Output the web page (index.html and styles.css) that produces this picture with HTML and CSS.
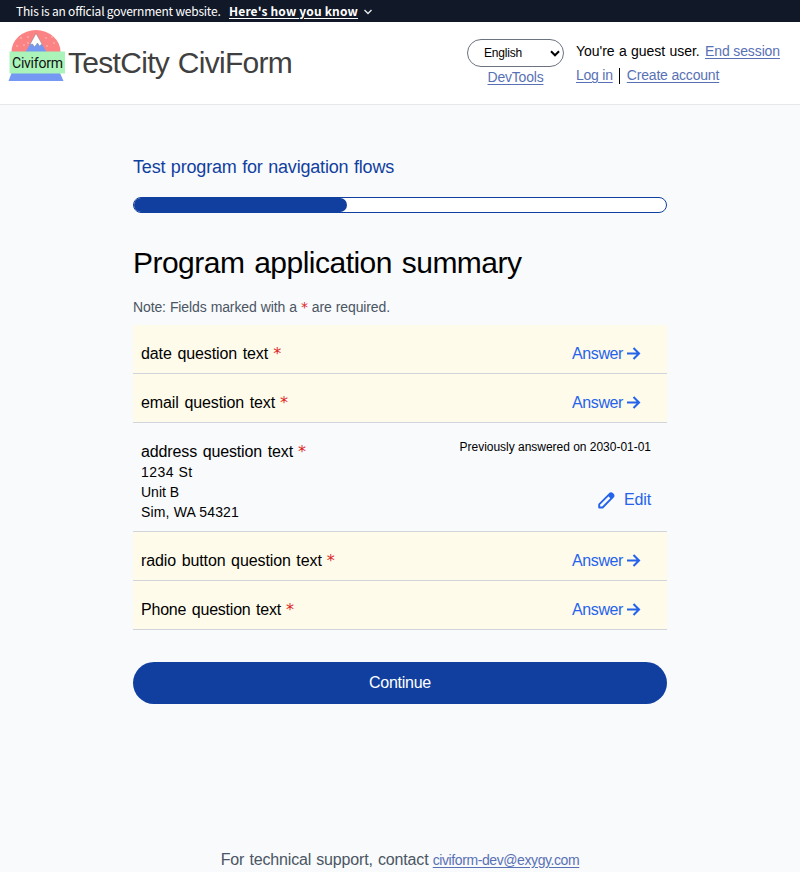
FILE: index.html
```html
<!DOCTYPE html>
<html lang="en">
<head>
<meta charset="utf-8">
<title>Program application summary</title>
<link rel="stylesheet" href="styles.css">
</head>
<body>
<div class="banner">
  <span class="banner-text">This is an official government website.</span>
  <a class="banner-link">Here's how you know</a>
  <svg class="chevron" width="8" height="6" viewBox="0 0 8 6"><path d="M.500 1l3.500 3.500L7.500 1" fill="none" stroke="#e5e7eb" stroke-width="1.4"/></svg>
</div>
<header class="header">
  <div class="brand">
    <svg class="logo" width="60" height="54" viewBox="0 0 60 54">
      <path d="M3.500 22A24.500 22 0 0 1 52.500 22Z" fill="#fb8383"/>
      <path d="M17.500 22L28 4L38.500 22Z" fill="#7598f3"/>
      <path d="M28 3.500L34 14L31.500 16L29.500 13L26.500 17L24.500 14L22 14.500Z" fill="#fff" stroke="#777" stroke-width=".4"/>
      <g fill="#fff" opacity=".7"><circle cx="20" cy="7" r=".7"/><circle cx="13" cy="8" r=".7"/><circle cx="20" cy="13" r=".7"/><circle cx="9" cy="16" r=".7"/><circle cx="16" cy="15" r=".7"/><circle cx="38" cy="8" r=".7"/><circle cx="44" cy="7" r=".7"/><circle cx="39" cy="16" r=".7"/><circle cx="46" cy="13" r=".7"/></g>
      <path d="M3.500 43H52L55.500 51H.500Z" fill="#7598f3"/>
      <path d="M1.500 21.500H57V43.500H1.500Z" fill="#aaf4ba"/>
      <text class="logo-text" x="4" y="38" textLength="51">Civiform</text>
    </svg>
    <span class="brand-name">TestCity CiviForm</span>
  </div>
  <div class="lang">
    <div class="select"><span>English</span><svg width="10" height="7" viewBox="0 0 10 7"><path d="M1 1.300l4 4 4-4" fill="none" stroke="#000" stroke-width="2"/></svg></div>
    <a class="link devtools">DevTools</a>
  </div>
  <div class="account">
    <div class="account-row"><span class="guest">You're a guest user.</span><a class="link end">End session</a></div>
    <div class="account-row"><a class="link login">Log in</a><span class="divider"></span><a class="link create">Create account</a></div>
  </div>
</header>
<main class="main">
  <h2 class="program">Test program for navigation flows</h2>
  <div class="progress"><div class="progress-fill"></div></div>
  <h1 class="title">Program application summary</h1>
  <p class="note">Note: Fields marked with a <span class="req">*</span> are required.</p>
  <div class="rows">
    <div class="row todo"><div class="question">date question text<span class="star">*</span></div><a class="action">Answer<svg class="arrow" viewBox="0 0 12 12"><path d="M0 6H11M6 .900L11.100 6L6 11.100" /></svg></a></div>
    <div class="row todo"><div class="question">email question text<span class="star">*</span></div><a class="action">Answer<svg class="arrow" viewBox="0 0 12 12"><path d="M0 6H11M6 .900L11.100 6L6 11.100" /></svg></a></div>
    <div class="row done">
      <div>
        <div class="question address">address question text<span class="star">*</span></div>
        <div class="answer"><div class="street">1234 St</div><div class="unit">Unit B</div><div class="city">Sim, WA 54321</div></div>
      </div>
      <div class="side">
        <div class="previous">Previously answered on 2030-01-01</div>
        <a class="edit"><svg class="pencil" width="17" height="17" viewBox="0 0 17 17"><path d="M1.200 12.300L11.700 1.800Q13 .600 14.500 1.900Q16.200 3.500 15 4.900L4.600 15.500H1.200Z" fill="none" stroke="#2563eb" stroke-width="1.900" stroke-linejoin="round"/><path d="M9.700 3.500L12 1.200Q13.200.500 14.600 1.700Q16.500 3.500 15.500 4.800L13.200 7.200Z" fill="#2563eb"/></svg><span>Edit</span></a>
      </div>
    </div>
    <div class="row todo"><div class="question radio">radio button question text<span class="star">*</span></div><a class="action">Answer<svg class="arrow" viewBox="0 0 12 12"><path d="M0 6H11M6 .900L11.100 6L6 11.100" /></svg></a></div>
    <div class="row todo"><div class="question phone">Phone question text<span class="star">*</span></div><a class="action">Answer<svg class="arrow" viewBox="0 0 12 12"><path d="M0 6H11M6 .900L11.100 6L6 11.100" /></svg></a></div>
  </div>
  <button class="continue">Continue</button>
</main>
<footer class="footer"><span class="support">For technical support, contact</span><a class="link mail">civiform-dev@exygy.com</a></footer>
</body>
</html>
```
FILE: styles.css
```css
* { box-sizing: border-box; margin: 0; padding: 0; }
body { height: 872px; overflow: hidden; display: flex; flex-direction: column; background: #f8fafc; color: #000; font-family: "Liberation Sans", Arial, sans-serif; font-size: 16px; line-height: 24px; }
svg { display: block; flex: none; }
.banner { height: 22px; flex: none; display: flex; align-items: center; padding-left: 16px; background: #111827; color: #fff; font: 12px/22px "Noto Sans CJK JP", sans-serif; white-space: nowrap; }
.banner-text { width: 213px; letter-spacing: -.214px; }
.banner-link { width: 129px; font-weight: 700; letter-spacing: .16px; text-decoration: underline; text-underline-offset: 2px; }
.chevron { margin: 2px 0 0 6px; }
.header { height: 83px; flex: none; display: flex; background: #fff; border-bottom: 1px solid #e5e7eb; white-space: nowrap; }
.brand { display: flex; padding: 8px 0 0 8px; width: 467px; }
.logo-text { font: 14px Roboto, sans-serif; fill: #111; }
.brand-name { color: #404040; font-size: 30px; line-height: 36px; letter-spacing: -.7px; word-spacing: 1px; margin-top: 15px; }
.lang { width: 97px; padding-top: 17px; text-align: center; }
.select { height: 28px; display: flex; align-items: center; justify-content: space-between; border: 1px solid #6b7280; border-radius: 14px; padding: 0 3px 0 16px; font-size: 12px; letter-spacing: -.19px; }
.link { font-size: 14px; color: #5871b5; text-decoration: underline; text-underline-offset: 2px; }
.devtools { display: block; line-height: 20px; letter-spacing: -.2px; }
.account { padding: 17px 0 0 12px; font-size: 14px; }
.account-row { display: flex; height: 24px; align-items: center; }
.guest { width: 129px; letter-spacing: -.03px; word-spacing: .5px; }
.end { letter-spacing: -.12px; }
.login { letter-spacing: -.23px; }
.divider { width: 1px; height: 16px; margin: 1px 7px 0 6px; background: #000; }
.create { letter-spacing: -.18px; }
.main { width: 534px; margin: 48px auto 0; }
.program { color: #113f9f; font-size: 18px; line-height: 28px; font-weight: 400; letter-spacing: -.19px; word-spacing: .8px; }
.progress { height: 16px; margin-top: 16px; border: 1px solid #113f9f; border-radius: 8px; background: #fff; overflow: hidden; }
.progress-fill { width: 40%; height: 14px; border-radius: 0 7px 7px 0; background: #113f9f; }
.title { margin-top: 32px; font-size: 30px; line-height: 36px; font-weight: 400; letter-spacing: -.52px; word-spacing: 2px; }
.note { margin-top: 16px; color: #4b5563; font-size: 14px; line-height: 20px; letter-spacing: -.12px; word-spacing: .3px; }
.req { color: #dc2626; font: 14px/1 "DejaVu Sans", sans-serif; }
.rows { margin-top: 8px; }
.row { display: flex; justify-content: space-between; border-bottom: 1px solid #d1d5db; padding: 0 16px 0 8px; }
.todo { height: 49px; padding-top: 16px; background: #fffbeb; }
.done { height: 109px; padding-top: 16px; }
.question { height: 25px; line-height: 26px; letter-spacing: -.1px; word-spacing: 1.3px; }
.address { letter-spacing: -.13px; }
.radio { letter-spacing: -.11px; }
.phone { letter-spacing: -.21px; }
.star { color: #dc2626; margin-left: 5px; font: 16px/1 "DejaVu Sans", sans-serif; }
.action, .edit { color: #2563eb; display: flex; align-items: center; }
.action { height: 25px; margin-right: 11px; letter-spacing: -.39px; }
.arrow { width: 13px; height: 13px; margin: -1px 0 0 4px; fill: none; stroke: #2563eb; stroke-width: 1.9; overflow: visible; }
.answer { margin-top: -2px; font-size: 14px; line-height: 20px; }
.street { letter-spacing: .5px; }
.city { letter-spacing: .155px; }
.side { display: flex; flex-direction: column; align-items: flex-end; }
.previous { font-size: 12px; line-height: 16px; letter-spacing: -.02px; }
.edit { margin-top: 33px; height: 24px; gap: 9px; letter-spacing: -.15px; }
.continue { display: block; width: 534px; height: 42px; margin-top: 32px; border: 0; border-radius: 21px; background: #113f9f; color: #fff; font: 16px "Liberation Sans", Arial, sans-serif; letter-spacing: -.25px; }
.footer { margin-top: 144px; display: flex; justify-content: center; align-items: center; height: 24px; flex: none; color: #4b5563; white-space: nowrap; }
.support { width: 212px; letter-spacing: -.15px; word-spacing: .8px; }
.mail { letter-spacing: -.41px; }
```
